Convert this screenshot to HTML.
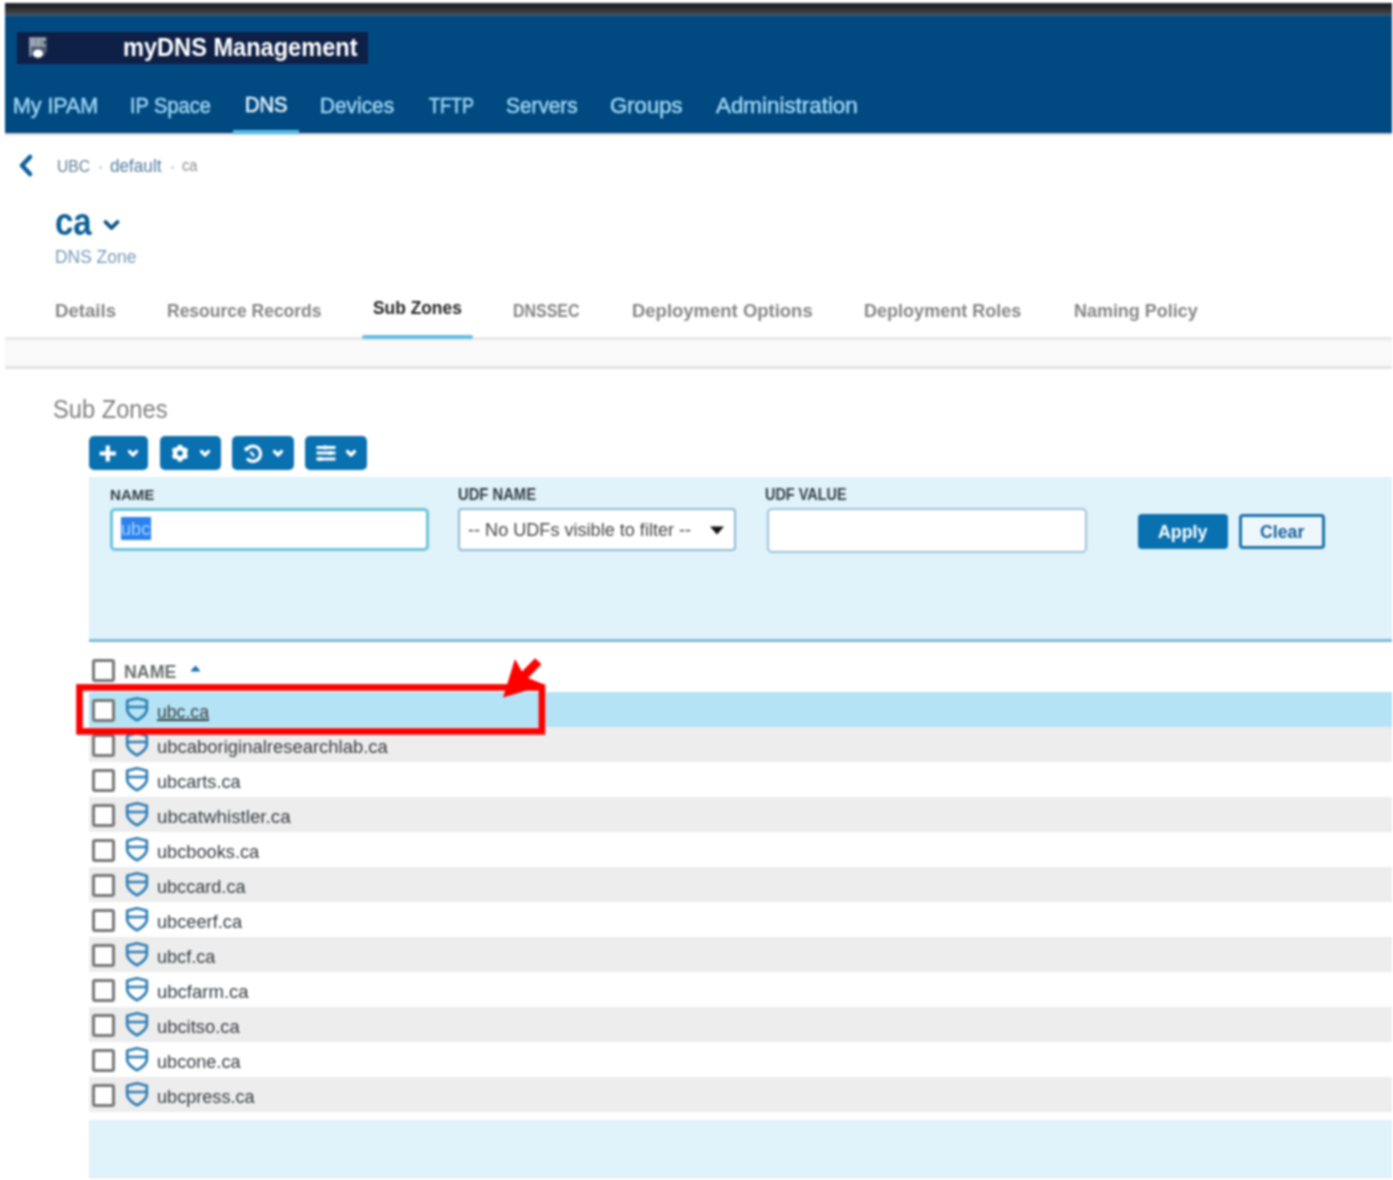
<!DOCTYPE html>
<html><head><meta charset="utf-8">
<style>
html,body{margin:0;padding:0;background:#fff;}
body{width:1393px;height:1180px;overflow:hidden;position:relative;font-family:"Liberation Sans",sans-serif;}
.a{position:absolute;box-sizing:border-box;}
.t{position:absolute;line-height:0;white-space:nowrap;transform-origin:0 0;font-family:"Liberation Sans",sans-serif;}
</style></head><body><div style="position:absolute;left:0;top:0;width:1393px;height:1180px;filter:blur(1px);">
<!-- header -->
<div class="a" style="left:5px;top:3px;width:1387px;height:130px;background:#014a81;"></div>
<div class="a" style="left:5px;top:133px;width:1387px;height:4px;background:linear-gradient(rgba(40,30,60,.28),rgba(120,60,90,.06) 60%,rgba(255,255,255,0));"></div>
<div class="a" style="left:5px;top:3px;width:1387px;height:13px;background:linear-gradient(#1b2127 0,#1f252b 25%,#38322f 50%,#3b4650 80%,#3c5a74 100%);"></div>
<div class="a" style="left:17px;top:32px;width:351px;height:32px;background:#0e2046;"></div>
<svg class="a" style="left:24px;top:33px" width="28" height="30" viewBox="0 0 28 30">
 <path d="M5,4 H23 V16 Q23,23.5 14,26 Q5,23.5 5,16 Z" fill="#4d5c70"/>
 <rect x="7" y="4.5" width="14.5" height="9" fill="#9aa6b0"/>
 <rect x="11.3" y="5.5" width="1.2" height="6" fill="#6f7d8a"/>
 <rect x="16.2" y="6.5" width="1.2" height="6" fill="#6f7d8a"/>
 <rect x="19.5" y="8" width="3" height="3" fill="#34405a"/>
 <rect x="5.2" y="4.5" width="2" height="11" fill="#9d96c4"/>
 <rect x="5.2" y="15.5" width="2" height="8" fill="#7f9bb2"/>
 <ellipse cx="14" cy="20.5" rx="5" ry="4" fill="#ffffff"/>
</svg>
<div class="a" style="left:233px;top:130px;width:66px;height:4px;background:#58bbe4;"></div>
<!-- breadcrumb chevron -->
<svg class="a" style="left:14px;top:150px" width="24" height="30" viewBox="0 0 24 30">
 <path d="M16,7 L8,15.5 L16,24" fill="none" stroke="#0f5f99" stroke-width="4.6" stroke-linecap="round" stroke-linejoin="round"/>
</svg>
<div class="a" style="left:98.5px;top:166px;width:3px;height:3px;border-radius:2px;background:#c8d0d6;"></div>
<div class="a" style="left:170.5px;top:166px;width:3px;height:3px;border-radius:2px;background:#c8d0d6;"></div>
<!-- title chevron -->
<svg class="a" style="left:100px;top:215px" width="24" height="20" viewBox="0 0 24 20">
 <path d="M5.5,7 L11.5,13 L17.5,7" fill="none" stroke="#0a5282" stroke-width="3.8" stroke-linecap="round" stroke-linejoin="round"/>
</svg>
<!-- tabs band -->
<div class="a" style="left:5px;top:337px;width:1387px;height:32px;background:#f9f9f9;border-top:3px solid #e8e8e8;border-bottom:3px solid #e4e4e4;"></div>
<div class="a" style="left:362px;top:335px;width:111px;height:4px;background:#66bde6;border-radius:2px;"></div>
<!-- toolbar buttons -->
<div class="a" style="left:89px;top:436px;width:59px;height:34px;background:#0a71b1;border-radius:5px;"></div>
<div class="a" style="left:160px;top:436px;width:61px;height:34px;background:#0a71b1;border-radius:5px;"></div>
<div class="a" style="left:232px;top:436px;width:61.5px;height:34px;background:#0a71b1;border-radius:5px;"></div>
<div class="a" style="left:305px;top:436px;width:62px;height:34px;background:#0a71b1;border-radius:5px;"></div>
<svg class="a" style="left:89px;top:436px" width="280" height="34" viewBox="89 436 280 34">
 <g fill="none" stroke="#ffffff" stroke-linecap="round" stroke-linejoin="round">
  <path d="M107.8,445.5 V461.5 M99.7,453.5 H115.9" stroke-width="4.2" stroke-linecap="butt"/>
  <path d="M129.5,451.5 L133,455 L136.5,451.5" stroke-width="3.2"/>
  <path d="M201.5,451.5 L205,455 L208.5,451.5" stroke-width="3.2"/>
  <path d="M274.5,451.5 L278,455 L281.5,451.5" stroke-width="3.2"/>
  <path d="M347.5,451.5 L351,455 L354.5,451.5" stroke-width="3.2"/>
  <path d="M247,449 A7.6,7.6 0 1 1 248,459.5" stroke-width="3.2"/>
  <path d="M251,452.5 L253.5,455.5" stroke-width="2.4"/>
  <path d="M316.5,447.5 H335.5 M316.5,453 H335.5 M316.5,459 H335.5" stroke-width="3" stroke-linecap="butt"/>
 </g>
 <circle cx="246.5" cy="449" r="2.2" fill="#fff"/>
 <g fill="#fff"><rect x="323.5" y="445.6" width="3.5" height="3.8" rx="0.8"/><rect x="328.5" y="451.1" width="3.5" height="3.8" rx="0.8"/><rect x="318.5" y="457.1" width="3.5" height="3.8" rx="0.8"/></g>
 <g transform="translate(180,453.2)" fill="#fff">
  <circle r="6.6"/>
  <circle cx="0" cy="-5.5" r="3"/><circle cx="4.76" cy="-2.75" r="3"/><circle cx="4.76" cy="2.75" r="3"/>
  <circle cx="0" cy="5.5" r="3"/><circle cx="-4.76" cy="2.75" r="3"/><circle cx="-4.76" cy="-2.75" r="3"/>
  <circle r="2.7" fill="#0a71b1"/>
 </g>
</svg>
<!-- filter panel -->
<div class="a" style="left:89px;top:477px;width:1303px;height:165px;background:#e0f2fa;border-bottom:3px solid #82b8d4;"></div>
<div class="a" style="left:110px;top:508px;width:319px;height:43px;background:#fff;border:3px solid #6cc4dc;border-radius:5px;"></div>
<div class="a" style="left:121px;top:517px;width:29.5px;height:23px;background:#2b82ee;"></div>
<div class="a" style="left:458px;top:508px;width:278px;height:43px;background:#fff;border:2px solid #92bad3;border-radius:4px;"></div>
<svg class="a" style="left:708px;top:524px" width="18" height="12" viewBox="0 0 18 12"><path d="M2,2.5 H16 L9,10.5 Z" fill="#111"/></svg>
<div class="a" style="left:767px;top:508px;width:320px;height:45px;background:#fff;border:2px solid #9fc4d7;border-radius:5px;"></div>
<div class="a" style="left:1138px;top:514px;width:90px;height:35px;background:#0a71b1;border-radius:4px;"></div>
<div class="a" style="left:1239px;top:514px;width:86px;height:35px;background:#eef8fc;border:3px solid #1a72ad;border-radius:4px;"></div>
<!-- table -->
<div class="a" style="left:92px;top:659px;width:23px;height:23px;border:3px solid #777;border-radius:3px;background:#fff;"></div>
<svg class="a" style="left:188px;top:663px" width="15" height="11" viewBox="0 0 15 11"><path d="M3.5,8 L7.5,3.5 L11.5,8 Z" fill="#1c6fae" stroke="#1c6fae" stroke-width="1.2" stroke-linejoin="round"/></svg>
<div class="a" style="left:89px;top:692.3px;width:1303px;height:35px;background:#b4e3f5;"></div>
<div class="a" style="left:92px;top:698.6px;width:23px;height:23px;border:3px solid #777;border-radius:3px;background:#fff;"></div>
<svg class="a" style="left:124px;top:696.3px" width="26" height="28" viewBox="0 0 26 28"><path d="M3.2,4.8 Q8,3.6 13,2.3 Q18,3.6 22.8,4.8 V14 Q22,19.5 13,24.2 Q4,19.5 3.2,14 Z M3.2,11 H22.8" fill="none" stroke="#2f7db3" stroke-width="2.7" stroke-linejoin="round"/></svg>
<div class="a" style="left:89px;top:727.3px;width:1303px;height:35px;background:#ededed;"></div>
<div class="a" style="left:92px;top:733.6px;width:23px;height:23px;border:3px solid #777;border-radius:3px;background:#fff;"></div>
<svg class="a" style="left:124px;top:731.3px" width="26" height="28" viewBox="0 0 26 28"><path d="M3.2,4.8 Q8,3.6 13,2.3 Q18,3.6 22.8,4.8 V14 Q22,19.5 13,24.2 Q4,19.5 3.2,14 Z M3.2,11 H22.8" fill="none" stroke="#2f7db3" stroke-width="2.7" stroke-linejoin="round"/></svg>
<div class="a" style="left:89px;top:762.3px;width:1303px;height:35px;background:#ffffff;"></div>
<div class="a" style="left:92px;top:768.6px;width:23px;height:23px;border:3px solid #777;border-radius:3px;background:#fff;"></div>
<svg class="a" style="left:124px;top:766.3px" width="26" height="28" viewBox="0 0 26 28"><path d="M3.2,4.8 Q8,3.6 13,2.3 Q18,3.6 22.8,4.8 V14 Q22,19.5 13,24.2 Q4,19.5 3.2,14 Z M3.2,11 H22.8" fill="none" stroke="#2f7db3" stroke-width="2.7" stroke-linejoin="round"/></svg>
<div class="a" style="left:89px;top:797.3px;width:1303px;height:35px;background:#ededed;"></div>
<div class="a" style="left:92px;top:803.6px;width:23px;height:23px;border:3px solid #777;border-radius:3px;background:#fff;"></div>
<svg class="a" style="left:124px;top:801.3px" width="26" height="28" viewBox="0 0 26 28"><path d="M3.2,4.8 Q8,3.6 13,2.3 Q18,3.6 22.8,4.8 V14 Q22,19.5 13,24.2 Q4,19.5 3.2,14 Z M3.2,11 H22.8" fill="none" stroke="#2f7db3" stroke-width="2.7" stroke-linejoin="round"/></svg>
<div class="a" style="left:89px;top:832.3px;width:1303px;height:35px;background:#ffffff;"></div>
<div class="a" style="left:92px;top:838.6px;width:23px;height:23px;border:3px solid #777;border-radius:3px;background:#fff;"></div>
<svg class="a" style="left:124px;top:836.3px" width="26" height="28" viewBox="0 0 26 28"><path d="M3.2,4.8 Q8,3.6 13,2.3 Q18,3.6 22.8,4.8 V14 Q22,19.5 13,24.2 Q4,19.5 3.2,14 Z M3.2,11 H22.8" fill="none" stroke="#2f7db3" stroke-width="2.7" stroke-linejoin="round"/></svg>
<div class="a" style="left:89px;top:867.3px;width:1303px;height:35px;background:#ededed;"></div>
<div class="a" style="left:92px;top:873.6px;width:23px;height:23px;border:3px solid #777;border-radius:3px;background:#fff;"></div>
<svg class="a" style="left:124px;top:871.3px" width="26" height="28" viewBox="0 0 26 28"><path d="M3.2,4.8 Q8,3.6 13,2.3 Q18,3.6 22.8,4.8 V14 Q22,19.5 13,24.2 Q4,19.5 3.2,14 Z M3.2,11 H22.8" fill="none" stroke="#2f7db3" stroke-width="2.7" stroke-linejoin="round"/></svg>
<div class="a" style="left:89px;top:902.3px;width:1303px;height:35px;background:#ffffff;"></div>
<div class="a" style="left:92px;top:908.6px;width:23px;height:23px;border:3px solid #777;border-radius:3px;background:#fff;"></div>
<svg class="a" style="left:124px;top:906.3px" width="26" height="28" viewBox="0 0 26 28"><path d="M3.2,4.8 Q8,3.6 13,2.3 Q18,3.6 22.8,4.8 V14 Q22,19.5 13,24.2 Q4,19.5 3.2,14 Z M3.2,11 H22.8" fill="none" stroke="#2f7db3" stroke-width="2.7" stroke-linejoin="round"/></svg>
<div class="a" style="left:89px;top:937.3px;width:1303px;height:35px;background:#ededed;"></div>
<div class="a" style="left:92px;top:943.6px;width:23px;height:23px;border:3px solid #777;border-radius:3px;background:#fff;"></div>
<svg class="a" style="left:124px;top:941.3px" width="26" height="28" viewBox="0 0 26 28"><path d="M3.2,4.8 Q8,3.6 13,2.3 Q18,3.6 22.8,4.8 V14 Q22,19.5 13,24.2 Q4,19.5 3.2,14 Z M3.2,11 H22.8" fill="none" stroke="#2f7db3" stroke-width="2.7" stroke-linejoin="round"/></svg>
<div class="a" style="left:89px;top:972.3px;width:1303px;height:35px;background:#ffffff;"></div>
<div class="a" style="left:92px;top:978.6px;width:23px;height:23px;border:3px solid #777;border-radius:3px;background:#fff;"></div>
<svg class="a" style="left:124px;top:976.3px" width="26" height="28" viewBox="0 0 26 28"><path d="M3.2,4.8 Q8,3.6 13,2.3 Q18,3.6 22.8,4.8 V14 Q22,19.5 13,24.2 Q4,19.5 3.2,14 Z M3.2,11 H22.8" fill="none" stroke="#2f7db3" stroke-width="2.7" stroke-linejoin="round"/></svg>
<div class="a" style="left:89px;top:1007.3px;width:1303px;height:35px;background:#ededed;"></div>
<div class="a" style="left:92px;top:1013.6px;width:23px;height:23px;border:3px solid #777;border-radius:3px;background:#fff;"></div>
<svg class="a" style="left:124px;top:1011.3px" width="26" height="28" viewBox="0 0 26 28"><path d="M3.2,4.8 Q8,3.6 13,2.3 Q18,3.6 22.8,4.8 V14 Q22,19.5 13,24.2 Q4,19.5 3.2,14 Z M3.2,11 H22.8" fill="none" stroke="#2f7db3" stroke-width="2.7" stroke-linejoin="round"/></svg>
<div class="a" style="left:89px;top:1042.3px;width:1303px;height:35px;background:#ffffff;"></div>
<div class="a" style="left:92px;top:1048.6px;width:23px;height:23px;border:3px solid #777;border-radius:3px;background:#fff;"></div>
<svg class="a" style="left:124px;top:1046.3px" width="26" height="28" viewBox="0 0 26 28"><path d="M3.2,4.8 Q8,3.6 13,2.3 Q18,3.6 22.8,4.8 V14 Q22,19.5 13,24.2 Q4,19.5 3.2,14 Z M3.2,11 H22.8" fill="none" stroke="#2f7db3" stroke-width="2.7" stroke-linejoin="round"/></svg>
<div class="a" style="left:89px;top:1077.3px;width:1303px;height:35px;background:#ededed;"></div>
<div class="a" style="left:92px;top:1083.6px;width:23px;height:23px;border:3px solid #777;border-radius:3px;background:#fff;"></div>
<svg class="a" style="left:124px;top:1081.3px" width="26" height="28" viewBox="0 0 26 28"><path d="M3.2,4.8 Q8,3.6 13,2.3 Q18,3.6 22.8,4.8 V14 Q22,19.5 13,24.2 Q4,19.5 3.2,14 Z M3.2,11 H22.8" fill="none" stroke="#2f7db3" stroke-width="2.7" stroke-linejoin="round"/></svg>
<div class="a" style="left:89px;top:1120px;width:1303px;height:58px;background:#e0f2fa;border-bottom:1px solid #d6e8f0;"></div>
<div class="t" style="left:123.23px;top:47.33px;font-size:26.45px;font-weight:700;color:#ffffff;transform:scaleX(0.8919);">myDNS Management</div>
<div class="t" style="left:13.33px;top:105.66px;font-size:21.19px;font-weight:400;color:#9dd5f3;transform:scaleX(1.0088);-webkit-text-stroke:0.5px currentColor;">My IPAM</div>
<div class="t" style="left:130.04px;top:105.66px;font-size:21.19px;font-weight:400;color:#9dd5f3;transform:scaleX(0.9439);-webkit-text-stroke:0.5px currentColor;">IP Space</div>
<div class="t" style="left:245.03px;top:104.61px;font-size:22.47px;font-weight:400;color:#dcedf8;transform:scaleX(0.8962);-webkit-text-stroke:0.7px currentColor;">DNS</div>
<div class="t" style="left:319.97px;top:105.66px;font-size:21.19px;font-weight:400;color:#9dd5f3;transform:scaleX(0.9829);-webkit-text-stroke:0.5px currentColor;">Devices</div>
<div class="t" style="left:428.52px;top:105.66px;font-size:21.19px;font-weight:400;color:#9dd5f3;transform:scaleX(0.8484);-webkit-text-stroke:0.5px currentColor;">TFTP</div>
<div class="t" style="left:506.25px;top:105.66px;font-size:21.19px;font-weight:400;color:#9dd5f3;transform:scaleX(0.9821);-webkit-text-stroke:0.5px currentColor;">Servers</div>
<div class="t" style="left:610.36px;top:105.66px;font-size:21.19px;font-weight:400;color:#9dd5f3;transform:scaleX(1.0452);-webkit-text-stroke:0.5px currentColor;">Groups</div>
<div class="t" style="left:716.40px;top:105.66px;font-size:21.19px;font-weight:400;color:#9dd5f3;transform:scaleX(1.0558);-webkit-text-stroke:0.5px currentColor;">Administration</div>
<div class="t" style="left:57.12px;top:165.59px;font-size:17.35px;font-weight:400;color:#5f7f98;transform:scaleX(0.9042);">UBC</div>
<div class="t" style="left:109.96px;top:165.56px;font-size:17.43px;font-weight:400;color:#527d9d;transform:scaleX(0.9837);">default</div>
<div class="t" style="left:181.84px;top:165.73px;font-size:16.94px;font-weight:400;color:#8c8c8c;transform:scaleX(0.8643);">ca</div>
<div class="t" style="left:55.47px;top:221.63px;font-size:39.15px;font-weight:700;color:#0b5e95;transform:scaleX(0.8432);">ca</div>
<div class="t" style="left:55.14px;top:257.00px;font-size:18.77px;font-weight:400;color:#7599b5;transform:scaleX(0.9284);">DNS Zone</div>
<div class="t" style="left:55.04px;top:311.44px;font-size:17.78px;font-weight:700;color:#858585;transform:scaleX(1.0484);">Details</div>
<div class="t" style="left:167.11px;top:311.44px;font-size:17.78px;font-weight:700;color:#858585;transform:scaleX(0.9841);">Resource Records</div>
<div class="t" style="left:512.80px;top:311.44px;font-size:17.78px;font-weight:700;color:#858585;transform:scaleX(0.8990);">DNSSEC</div>
<div class="t" style="left:631.54px;top:311.44px;font-size:17.78px;font-weight:700;color:#858585;transform:scaleX(1.0401);">Deployment Options</div>
<div class="t" style="left:863.87px;top:311.44px;font-size:17.78px;font-weight:700;color:#858585;transform:scaleX(1.0152);">Deployment Roles</div>
<div class="t" style="left:1073.78px;top:311.44px;font-size:17.78px;font-weight:700;color:#858585;transform:scaleX(1.0099);">Naming Policy</div>
<div class="t" style="left:372.83px;top:308.45px;font-size:19.20px;font-weight:700;color:#252525;transform:scaleX(0.9056);">Sub Zones</div>
<div class="t" style="left:53.06px;top:408.93px;font-size:25.32px;font-weight:400;color:#808080;transform:scaleX(0.9358);">Sub Zones</div>
<div class="t" style="left:110.36px;top:494.98px;font-size:15.36px;font-weight:700;color:#313d43;transform:scaleX(0.9827);">NAME</div>
<div class="t" style="left:457.61px;top:495.08px;font-size:15.64px;font-weight:700;color:#313d43;transform:scaleX(0.9458);">UDF NAME</div>
<div class="t" style="left:765.42px;top:495.18px;font-size:15.93px;font-weight:700;color:#313d43;transform:scaleX(0.9065);">UDF VALUE</div>
<div class="t" style="left:467.73px;top:530.15px;font-size:18.92px;font-weight:400;color:#474747;transform:scaleX(0.9567);">-- No UDFs visible to filter --</div>
<div class="t" style="left:121.37px;top:529.38px;font-size:18.52px;font-weight:400;color:#a9d4ff;transform:scaleX(0.9785);">ubc</div>
<div class="t" style="left:1158.42px;top:531.94px;font-size:17.78px;font-weight:700;color:#ffffff;transform:scaleX(1.0017);">Apply</div>
<div class="t" style="left:1259.65px;top:531.94px;font-size:17.78px;font-weight:700;color:#14629a;transform:scaleX(0.9963);">Clear</div>
<div class="t" style="left:123.89px;top:672.34px;font-size:18.35px;font-weight:700;color:#6a6f70;transform:scaleX(0.9678);">NAME</div>
<div class="t" style="left:156.90px;top:711.51px;font-size:17.57px;font-weight:400;color:#363c40;transform:scaleX(1.0046);text-decoration:underline;text-decoration-thickness:2px;text-underline-offset:1px;">ubc.ca</div>
<div class="t" style="left:156.85px;top:746.51px;font-size:17.57px;font-weight:400;color:#363c40;transform:scaleX(1.0506);">ubcaboriginalresearchlab.ca</div>
<div class="t" style="left:156.87px;top:781.51px;font-size:17.57px;font-weight:400;color:#363c40;transform:scaleX(1.0319);">ubcarts.ca</div>
<div class="t" style="left:156.83px;top:816.51px;font-size:17.57px;font-weight:400;color:#363c40;transform:scaleX(1.0694);">ubcatwhistler.ca</div>
<div class="t" style="left:156.86px;top:851.51px;font-size:17.57px;font-weight:400;color:#363c40;transform:scaleX(1.0364);">ubcbooks.ca</div>
<div class="t" style="left:156.87px;top:886.51px;font-size:17.57px;font-weight:400;color:#363c40;transform:scaleX(1.0301);">ubccard.ca</div>
<div class="t" style="left:156.86px;top:921.51px;font-size:17.57px;font-weight:400;color:#363c40;transform:scaleX(1.0366);">ubceerf.ca</div>
<div class="t" style="left:156.87px;top:956.51px;font-size:17.57px;font-weight:400;color:#363c40;transform:scaleX(1.0297);">ubcf.ca</div>
<div class="t" style="left:156.84px;top:991.51px;font-size:17.57px;font-weight:400;color:#363c40;transform:scaleX(1.0547);">ubcfarm.ca</div>
<div class="t" style="left:156.85px;top:1026.51px;font-size:17.57px;font-weight:400;color:#363c40;transform:scaleX(1.0461);">ubcitso.ca</div>
<div class="t" style="left:156.87px;top:1061.51px;font-size:17.57px;font-weight:400;color:#363c40;transform:scaleX(1.0303);">ubcone.ca</div>
<div class="t" style="left:156.87px;top:1096.51px;font-size:17.57px;font-weight:400;color:#363c40;transform:scaleX(1.0307);">ubcpress.ca</div>
<!-- red annotation -->
<svg class="a" style="left:0;top:0" width="1393" height="1180" viewBox="0 0 1393 1180">
 <rect x="79.5" y="687.4" width="462.4" height="44" fill="none" stroke="#ff0000" stroke-width="6.6"/>
 <path d="M503,697.6 L515,659 L522,671.4 L535.1,658.2 L541.4,664.2 L528.1,678 L545,684.7 Z" fill="#ff0000"/>
</svg>
</div></body></html>
